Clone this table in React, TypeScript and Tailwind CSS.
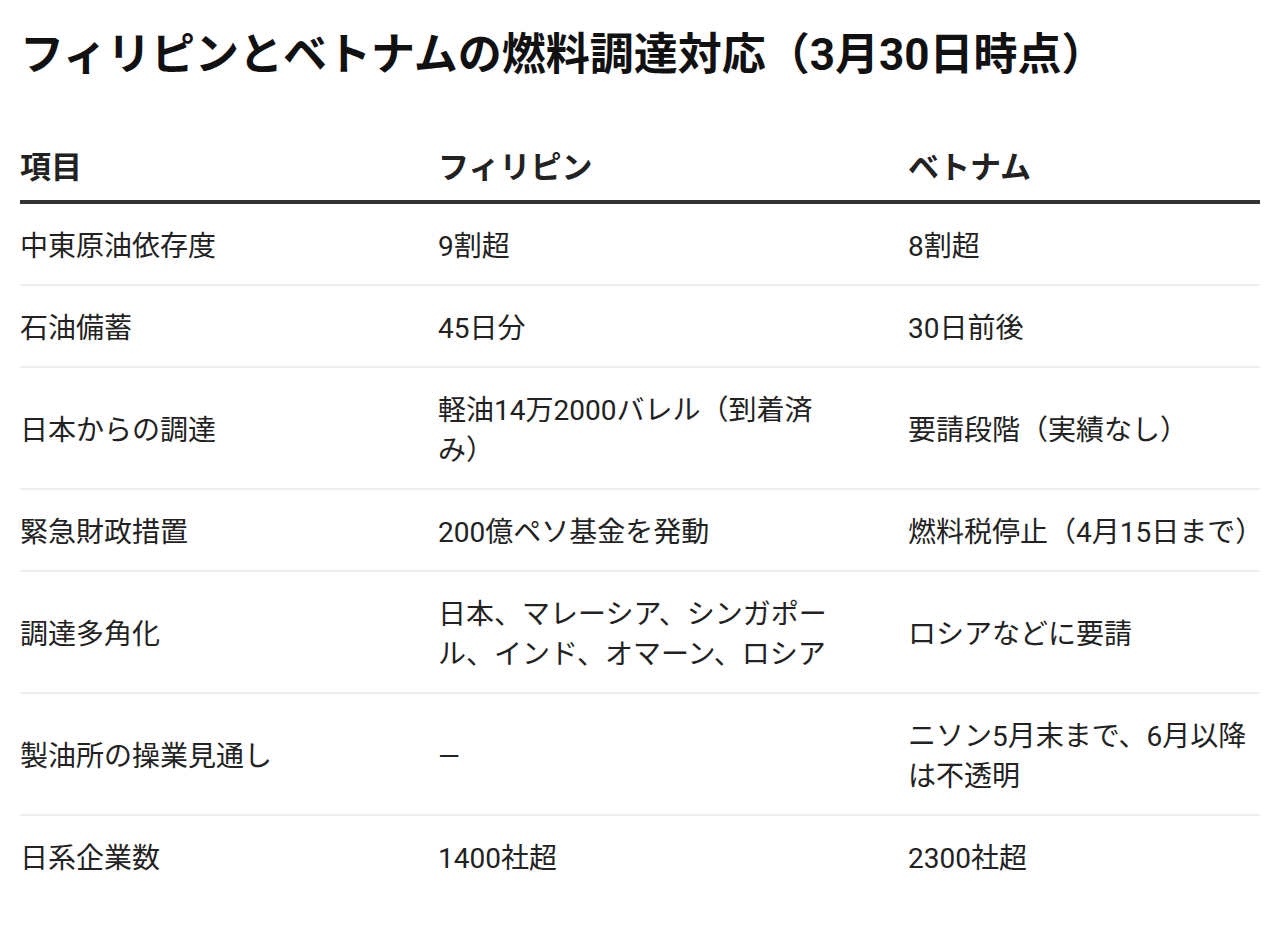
const rows: [string, string, string][] = [
  ["中東原油依存度", "9割超", "8割超"],
  ["石油備蓄", "45日分", "30日前後"],
  ["日本からの調達", "軽油14万2000バレル（到着済み）", "要請段階（実績なし）"],
  ["緊急財政措置", "200億ペソ基金を発動", "燃料税停止（4月15日まで）"],
  ["調達多角化", "日本、マレーシア、シンガポール、インド、オマーン、ロシア", "ロシアなどに要請"],
  ["製油所の操業見通し", "—", "ニソン5月末まで、6月以降は不透明"],
  ["日系企業数", "1400社超", "2300社超"],
];

export default function App() {
  return (
    <div className="min-h-[930px] bg-white px-5 text-[#222] [font-family:Roboto,'Noto_Sans_CJK_JP',sans-serif]">
      <h1 className="pt-[25px] text-[44px] font-bold leading-[60px] text-[#111]">
        フィリピンとベトナムの燃料調達対応（3月30日時点）
      </h1>
      <table className="mt-[45px] w-[1240px] table-fixed border-collapse text-left">
        <colgroup>
          <col className="w-[418px]" />
          <col className="w-[470px]" />
          <col className="w-[352px]" />
        </colgroup>
        <thead>
          <tr className="border-b-4 border-[#333]">
            <th className="pt-[18px] pb-[12px] text-[31px] font-bold leading-[40px]">項目</th>
            <th className="pt-[18px] pb-[12px] text-[31px] font-bold leading-[40px]">フィリピン</th>
            <th className="pt-[18px] pb-[12px] text-[31px] font-bold leading-[40px]">ベトナム</th>
          </tr>
        </thead>
        <tbody>
          {rows.map((r, i) => (
            <tr
              key={r[0]}
              className={i < rows.length - 1 ? "border-b-2 border-[#eeeeee]" : ""}
            >
              <td className="pt-[23px] pb-[17px] pr-4 align-middle text-[28px] leading-[40px]">{r[0]}</td>
              <td className="pt-[23px] pb-[17px] pr-[76px] align-middle text-[28px] leading-[40px]">{r[1]}</td>
              <td className="pt-[23px] pb-[17px] align-middle text-[28px] leading-[40px]">{r[2]}</td>
            </tr>
          ))}
        </tbody>
      </table>
    </div>
  );
}
